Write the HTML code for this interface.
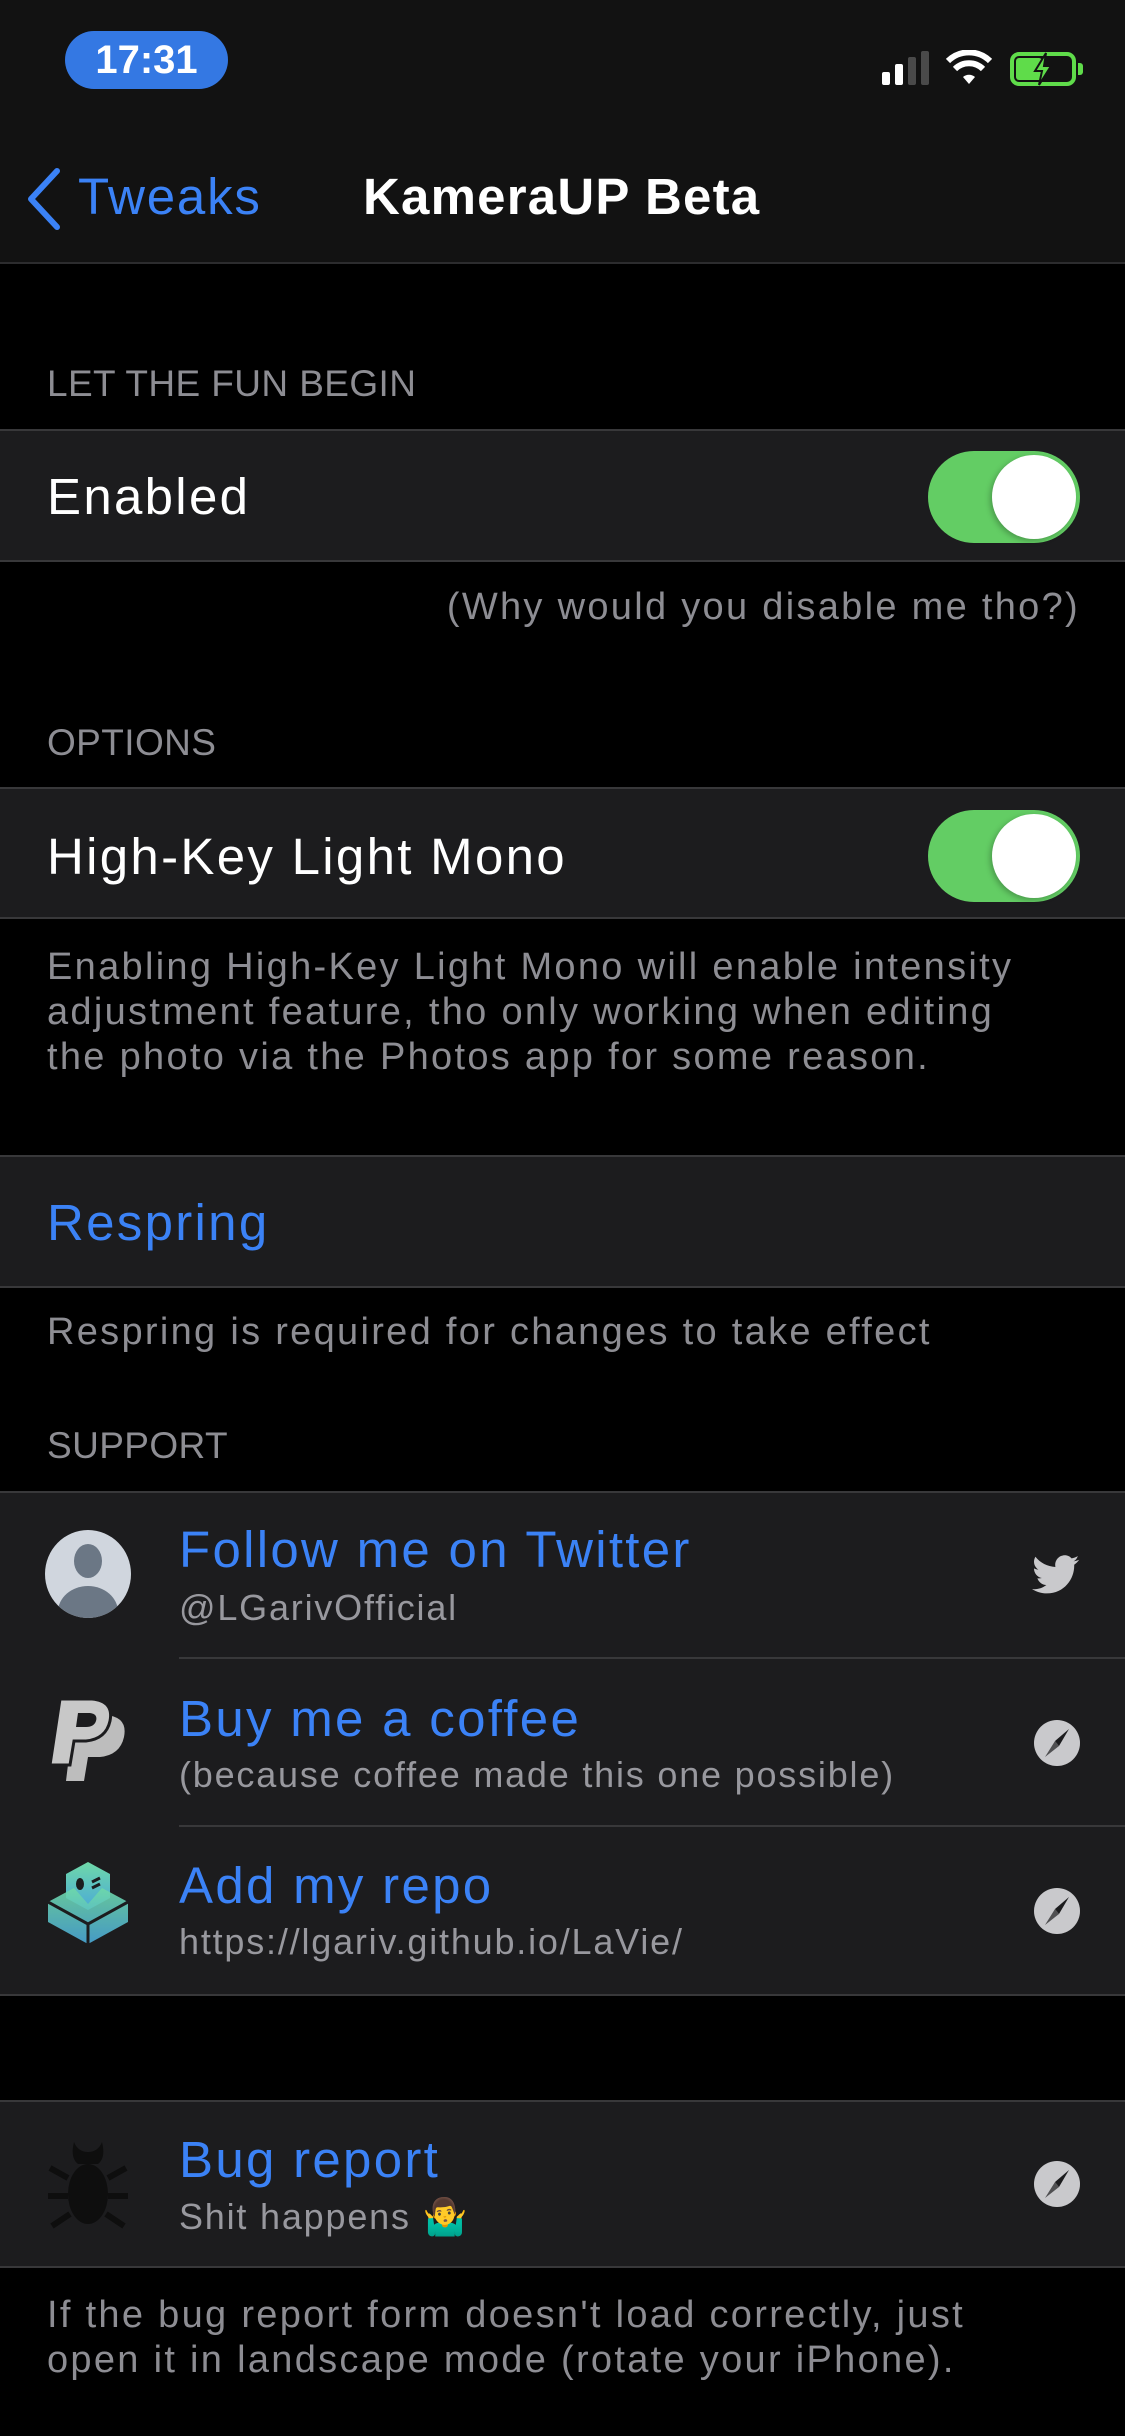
<!DOCTYPE html>
<html><head><meta charset="utf-8">
<style>
*{margin:0;padding:0;box-sizing:border-box}
body{width:1125px;height:2436px;background:#000;font-family:"Liberation Sans","Noto Sans CJK JP",sans-serif;position:relative;overflow:hidden;color:#fff}
.a{position:absolute;white-space:nowrap}
.grp{position:absolute;left:0;width:1125px;background:#1c1c1e;border-top:2px solid #38383a;border-bottom:2px solid #38383a}
.hdr{font-size:37px;color:#8d8d93;left:47px;letter-spacing:0.4px}
.ft{font-size:38px;color:#8d8d93;line-height:45px;letter-spacing:2.3px}
.t{font-size:51px;color:#fff;left:47px;letter-spacing:2.3px}
.blue{color:#3b82f6}
.sub{font-size:36px;color:#98989e;left:179px;letter-spacing:1.8px}
.tog{position:absolute;left:928px;width:152px;height:92px;border-radius:46px;background:#63cd64}
.tog::after{content:"";position:absolute;right:4px;top:4px;width:84px;height:84px;border-radius:50%;background:#fff;box-shadow:-2px 2px 6px rgba(0,0,0,.25)}
.sep{position:absolute;left:179px;right:0;height:2px;background:#38383a}
.cmp{position:absolute;left:1033px;width:48px;height:48px}
</style></head><body>
<div class="a" style="left:0;top:0;width:1125px;height:264px;background:#121212;border-bottom:2px solid #2c2c2e"></div>
<div class="a" style="left:65px;top:31px;width:163px;height:58px;border-radius:29px;background:#3478e3;color:#fff;font-weight:bold;font-size:40px;text-align:center;line-height:58px">17:31</div>
<div class="a" style="left:882px;top:72px;width:8px;height:13px;background:#fff;border-radius:2px"></div>
<div class="a" style="left:895px;top:64px;width:8px;height:21px;background:#fff;border-radius:2px"></div>
<div class="a" style="left:908px;top:57px;width:8px;height:28px;background:#4a4a4a;border-radius:2px"></div>
<div class="a" style="left:921px;top:51px;width:8px;height:34px;background:#4a4a4a;border-radius:2px"></div>
<svg class="a" style="left:946px;top:50px" width="46" height="36" viewBox="0 0 46 36"><path d="M23 34 L17 27 A9 9 0 0 1 29 27 Z" fill="#fff"/><path d="M9 19 A20 20 0 0 1 37 19" stroke="#fff" stroke-width="6" fill="none"/><path d="M2 11 A30 30 0 0 1 44 11" stroke="#fff" stroke-width="6" fill="none"/></svg>
<div class="a" style="left:1010px;top:52px;width:66px;height:34px;border:4px solid #5fdc4a;border-radius:9px"></div>
<div class="a" style="left:1016px;top:58px;width:26px;height:22px;background:#5fdc4a;border-radius:3px"></div>
<div class="a" style="left:1078px;top:63px;width:5px;height:12px;background:#5fdc4a;border-radius:0 3px 3px 0"></div>
<svg class="a" style="left:1030px;top:50px" width="26" height="38" viewBox="0 0 26 38"><path d="M16 3 L5 21 L12 21 L9 35 L21 16 L14 16 Z" fill="#5fdc4a" stroke="#121212" stroke-width="2"/></svg>
<svg class="a" style="left:24px;top:167px" width="40" height="64" viewBox="0 0 40 64"><path d="M33 4 L7 32 L33 60" stroke="#3b82f6" stroke-width="6" fill="none" stroke-linecap="round" stroke-linejoin="round"/></svg>
<div class="a blue" style="left:78px;top:167px;font-size:51px;line-height:60px;letter-spacing:1.8px">Tweaks</div>
<div class="a" style="left:363px;top:167px;font-size:51px;font-weight:bold;line-height:60px;letter-spacing:1.2px">KameraUP Beta</div>

<div class="a hdr" style="top:363px">LET THE FUN BEGIN</div>
<div class="grp" style="top:429px;height:133px"></div>
<div class="a t" style="top:467px">Enabled</div>
<div class="tog" style="top:451px"></div>
<div class="a ft" style="right:45px;top:585px">(Why would you disable me tho?)</div>

<div class="a hdr" style="top:722px">OPTIONS</div>
<div class="grp" style="top:787px;height:132px"></div>
<div class="a t" style="top:827px">High-Key Light Mono</div>
<div class="tog" style="top:810px"></div>
<div class="a ft" style="left:47px;top:945px">Enabling High-Key Light Mono will enable intensity<br>adjustment feature, tho only working when editing<br>the photo via the Photos app for some reason.</div>

<div class="grp" style="top:1155px;height:133px"></div>
<div class="a t blue" style="top:1193px">Respring</div>
<div class="a ft" style="left:47px;top:1310px">Respring is required for changes to take effect</div>

<div class="a hdr" style="top:1425px">SUPPORT</div>
<div class="grp" style="top:1491px;height:505px"></div>
<div class="sep" style="top:1657px"></div>
<div class="sep" style="top:1825px"></div>
<svg class="a" style="left:44px;top:1530px" width="88" height="88" viewBox="0 0 88 88"><defs><clipPath id="c"><ellipse cx="44" cy="44" rx="43" ry="44"/></clipPath></defs><ellipse cx="44" cy="44" rx="43" ry="44" fill="#d0d6de"/><g clip-path="url(#c)" fill="#6b7785"><ellipse cx="44" cy="31" rx="14" ry="17"/><ellipse cx="44" cy="82" rx="30" ry="26"/></g></svg>
<div class="a t blue" style="left:179px;top:1520px">Follow me on Twitter</div>
<div class="a sub" style="top:1587px">@LGarivOfficial</div>
<svg class="a" style="left:1032px;top:1555px" width="48" height="40" viewBox="0 0 24 20"><path d="M23.6 2.4c-.9.4-1.8.6-2.8.8 1-.6 1.8-1.6 2.1-2.7-.9.6-2 1-3.1 1.2C19 .7 17.8.1 16.4.1c-2.7 0-4.8 2.200-4.800 4.8 0 .4 0 .8.1 1.1-4-.2-7.6-2.1-10-5.1-.4.7-.7 1.6-.7 2.4 0 1.7.9 3.2 2.2 4-.8 0-1.5-.2-2.2-.6v.1c0 2.3 1.7 4.3 3.9 4.7-.4.1-.8.2-1.3.2-.3 0-.6 0-.9-.1.6 1.9 2.4 3.3 4.5 3.4-1.7 1.3-3.700 2.1-6 2.1-.4 0-.8 0-1.2-.1 2.1 1.4 4.7 2.2 7.4 2.2 8.9 0 13.7-7.4 13.7-13.7v-.6c1-.7 1.8-1.5 2.5-2.5z" fill="#c9c9cc"/></svg>
<svg class="a" style="left:44px;top:1695px" width="88" height="92" viewBox="0 0 88 92"><path d="M30 20 L62 20 Q84 22 80 42 Q76 60 56 62 L44 62 L40 86 L22 86 Z" fill="#bdbdbd"/><path d="M16 4 L48 4 Q70 6 66 26 Q62 44 42 46 L30 46 L26 70 L6 70 Z" fill="#c8c8c8" stroke="#1c1c1e" stroke-width="3"/><path d="M34 18 L46 18 Q54 19 52 26 Q50 32 42 32 L32 32 Z" fill="#1c1c1e"/></svg>
<div class="a t blue" style="left:179px;top:1689px">Buy me a coffee</div>
<div class="a sub" style="top:1754px">(because coffee made this one possible)</div>
<svg class="cmp" style="top:1719px" viewBox="0 0 48 48"><circle cx="24" cy="24" r="23" fill="#c9c9cc"/><path d="M36 10 L26 27 L22 22 Z" fill="#1c1c1e"/><path d="M12 38 L22 22 L26 27 Z" fill="#1c1c1e" opacity=".7"/></svg>
<svg class="a" style="left:44px;top:1858px" width="88" height="92" viewBox="0 0 88 92"><defs><linearGradient id="g" x1="0" y1="0" x2="0" y2="1"><stop offset="0" stop-color="#6fd9a8"/><stop offset="1" stop-color="#4aa8d8"/></linearGradient></defs><path d="M44 4 L66 16 L66 40 L44 52 L22 40 L22 16 Z" fill="url(#g)"/><path d="M4 44 L30 30 L44 46 L58 30 L84 44 L84 64 L44 86 L4 64 Z" fill="url(#g)" opacity=".9"/><path d="M4 44 L44 66 L84 44 M44 66 L44 86" stroke="#1c1c1e" stroke-width="3" fill="none"/><ellipse cx="36" cy="26" rx="4" ry="6" fill="#1c1c1e"/><path d="M48 24 L56 20 M48 30 L56 26" stroke="#1c1c1e" stroke-width="3"/></svg>
<div class="a t blue" style="left:179px;top:1856px">Add my repo</div>
<div class="a sub" style="top:1921px">https://lgariv.github.io/LaVie/</div>
<svg class="cmp" style="top:1887px" viewBox="0 0 48 48"><circle cx="24" cy="24" r="23" fill="#c9c9cc"/><path d="M36 10 L26 27 L22 22 Z" fill="#1c1c1e"/><path d="M12 38 L22 22 L26 27 Z" fill="#1c1c1e" opacity=".7"/></svg>

<div class="grp" style="top:2100px;height:168px"></div>
<svg class="a" style="left:44px;top:2138px" width="88" height="92" viewBox="0 0 88 92"><g fill="#0e0e0e"><path d="M30 4 Q26 20 34 26 L54 26 Q62 20 58 4 Q54 14 44 14 Q34 14 30 4Z"/><ellipse cx="44" cy="56" rx="20" ry="30"/><path d="M24 40 L6 30 M24 58 L4 58 M26 76 L8 88 M64 40 L82 30 M64 58 L84 58 M62 76 L80 88" stroke="#0e0e0e" stroke-width="6"/></g></svg>
<div class="a t blue" style="left:179px;top:2130px">Bug report</div>
<div class="a sub" style="top:2196px">Shit happens 🤷‍♂️</div>
<svg class="cmp" style="top:2160px" viewBox="0 0 48 48"><circle cx="24" cy="24" r="23" fill="#c9c9cc"/><path d="M36 10 L26 27 L22 22 Z" fill="#1c1c1e"/><path d="M12 38 L22 22 L26 27 Z" fill="#1c1c1e" opacity=".7"/></svg>

<div class="a ft" style="left:47px;top:2293px">If the bug report form doesn't load correctly, just<br>open it in landscape mode (rotate your iPhone).</div>
</body></html>
